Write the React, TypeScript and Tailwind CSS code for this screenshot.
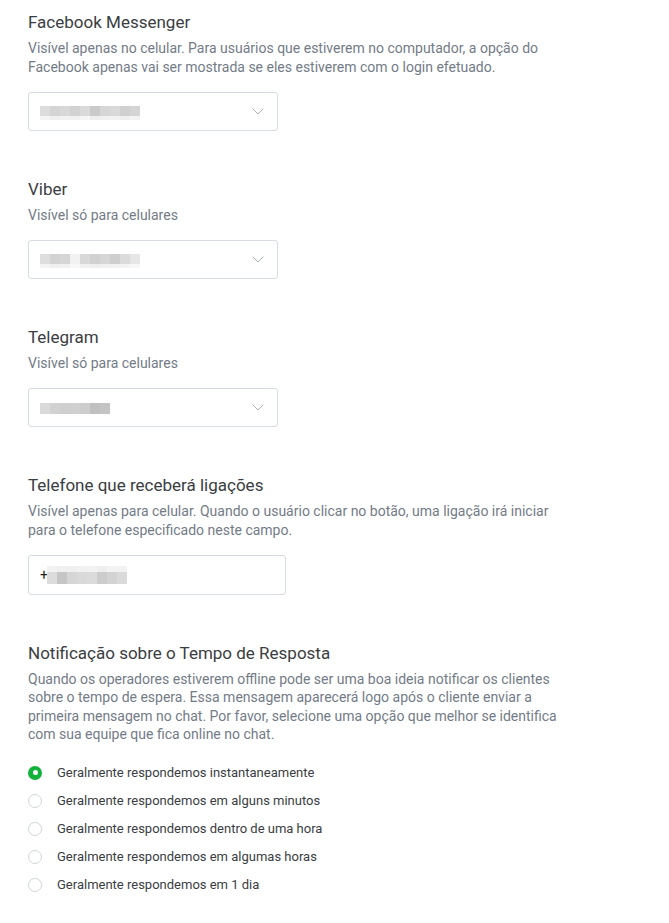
import { useState } from 'react';

const FONT = "font-['Roboto','Liberation_Sans',sans-serif]";

type Cell = string;

const BLUR_FB: Cell[][] = [
  ['#dcdcdc', '#d4d4d4', '#d8d8d8', '#d2d2d2', '#dadada', '#cacaca', '#d6d6d6', '#d9d9d9', '#d0d0d0', '#d4d4d4'],
  ['#f4f4f4', '#efefef', '#f1f1f1', '#f0f0f0', '#f6f6f6', '#eeeeee', '#f0f0f0', '#f2f2f2', '#efefef', '#f3f3f3'],
];
const BLUR_VIBER: Cell[][] = [
  ['#dedede', '#d3d3d3', '#d6d6d6', '#f2f2f2', '#d8d8d8', '#d1d1d1', '#d6d6d6', '#cecece', '#dbdbdb', '#e6e6e6'],
  ['#f4f4f4', '#efefef', '#f1f1f1', '#f8f8f8', '#f0f0f0', '#eeeeee', '#f0f0f0', '#f1f1f1', '#f3f3f3', '#f7f7f7'],
];
const BLUR_TG: Cell[][] = [
  ['#dadada', '#d2d2d2', '#cfcfcf', '#d0d0d0', '#cdcdcd', '#c0c0c0', '#c4c4c4'],
];
const BLUR_PHONE: Cell[][] = [
  ['#f2f2f2', '#f0f0f0', '#efefef', '#f1f1f1', '#f2f2f2', '#eeeeee', '#f3f3f3', '#f2f2f2'],
  ['#dcdcdc', '#c6c6c6', '#d6d6d6', '#d9d9d9', '#dbdbdb', '#cccccc', '#d3d3d3', '#dadada'],
];

const Blur = ({ rows, cell = 10, rowH = [10, 4] }: { rows: Cell[][]; cell?: number; rowH?: number[] }) => (
  <div className="flex flex-col">
    {rows.map((row, i) => (
      <div key={i} className="flex">
        {row.map((c, j) => (
          <div key={j} style={{ background: c, width: cell, height: rowH[i] ?? 10 }} />
        ))}
      </div>
    ))}
  </div>
);

const Chevron = () => (
  <svg width="12" height="7" viewBox="0 0 12 7" fill="none" className="shrink-0">
    <path d="M1 1l5 5 5-5" stroke="#a9b2c0" strokeWidth="1" strokeLinecap="round" strokeLinejoin="round" />
  </svg>
);

const SelectBox = ({ rows, rowH }: { rows: Cell[][]; rowH?: number[] }) => (
  <div className="mt-[15px] flex h-[39px] w-[250px] items-center justify-between rounded-[3px] border border-[#d7dce4] bg-white pl-[11px] pr-[13px]">
    <div className="pt-[2px]">
      <Blur rows={rows} rowH={rowH} />
    </div>
    <Chevron />
  </div>
);

const Section = ({ title, desc, children, tight }: { title: string; desc: string; children: React.ReactNode; tight?: boolean }) => (
  <div>
    <h2 className="text-[17px] leading-[25px] text-[#3a3d42]">{title}</h2>
    <p className={`mt-[4px] w-[540px] text-[14px] text-[#737b87] ${tight ? 'leading-[18.4px]' : 'leading-[19px]'}`}>{desc}</p>
    {children}
  </div>
);

const OPTIONS = [
  'Geralmente respondemos instantaneamente',
  'Geralmente respondemos em alguns minutos',
  'Geralmente respondemos dentro de uma hora',
  'Geralmente respondemos em algumas horas',
  'Geralmente respondemos em 1 dia',
];

export default function App() {
  const [selected, setSelected] = useState(0);

  return (
    <div className={`${FONT} min-h-[923px] bg-white pl-[28px] pt-[10px]`}>
      <div className="flex flex-col gap-[46px]">
        <Section
          title="Facebook Messenger"
          desc="Visível apenas no celular. Para usuários que estiverem no computador, a opção do Facebook apenas vai ser mostrada se eles estiverem com o login efetuado."
        >
          <SelectBox rows={BLUR_FB} />
        </Section>

        <Section title="Viber" desc="Visível só para celulares">
          <SelectBox rows={BLUR_VIBER} />
        </Section>

        <Section title="Telegram" desc="Visível só para celulares">
          <SelectBox rows={BLUR_TG} rowH={[11]} />
        </Section>

        <Section
          title="Telefone que receberá ligações"
          desc="Visível apenas para celular. Quando o usuário clicar no botão, uma ligação irá iniciar para o telefone especificado neste campo."
        >
          <div className="mt-[15px] flex h-[40px] w-[258px] items-center rounded-[3px] border border-[#d7dce4] bg-white pl-[11px]">
            <span className="text-[14px] leading-none text-[#222]">+</span>
            <div className="-ml-[1px]">
              <Blur rows={BLUR_PHONE} rowH={[6, 12]} />
            </div>
          </div>
        </Section>

        <Section
          tight
          title="Notificação sobre o Tempo de Resposta"
          desc="Quando os operadores estiverem offline pode ser uma boa ideia notificar os clientes sobre o tempo de espera. Essa mensagem aparecerá logo após o cliente enviar a primeira mensagem no chat. Por favor, selecione uma opção que melhor se identifica com sua equipe que fica online no chat."
        >
          <div className="mt-[15px] flex flex-col">
            {OPTIONS.map((opt, i) => (
              <label key={opt} className="flex h-[28px] cursor-pointer items-center gap-[15px]" onClick={() => setSelected(i)}>
                {selected === i ? (
                  <span className="flex h-[14px] w-[14px] items-center justify-center rounded-full bg-[#13b33b]">
                    <span className="h-[5px] w-[5px] rounded-full bg-white" />
                  </span>
                ) : (
                  <span className="h-[14px] w-[14px] rounded-full border border-[#d0d5dc] bg-white" />
                )}
                <span className="text-[13px] text-[#3a3d42]">{opt}</span>
              </label>
            ))}
          </div>
        </Section>
      </div>
    </div>
  );
}
